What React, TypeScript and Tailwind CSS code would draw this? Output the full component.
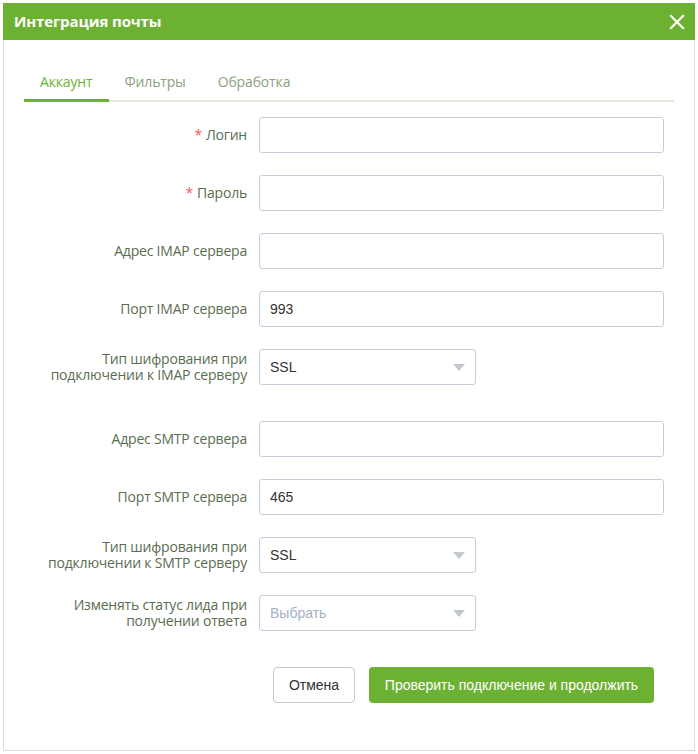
import React from "react";

const LABEL_FONT = "font-['Open_Sans',sans-serif]";

function Label({ children, required }: { children: React.ReactNode; required?: boolean }) {
  return (
    <div
      className={`w-[223px] shrink-0 text-right text-[14px] leading-[16px] tracking-[-0.2px] text-[#5a6d50] ${LABEL_FONT}`}
    >
      {required && <span className="mr-1 text-[#ee5a5a]">*</span>}
      {children}
    </div>
  );
}

function TextInput({ value }: { value?: string }) {
  return (
    <div className="flex h-[36px] w-[405px] items-center rounded-[3px] border border-[#c4cedb] bg-white px-[10px] font-['Liberation_Sans',Arial,sans-serif] text-[14px] text-[#333]">
      {value}
    </div>
  );
}

function SelectInput({ value, placeholder }: { value?: string; placeholder?: string }) {
  return (
    <div className="flex h-[36px] w-[217px] items-center justify-between rounded-[3px] border border-[#c4cedb] bg-white pl-[10px] pr-[10px] font-['Liberation_Sans',Arial,sans-serif] text-[14px]">
      <span className={value ? "text-[#333]" : "text-[#a3b0c2]"}>{value ?? placeholder}</span>
      <svg width="12" height="7" viewBox="0 0 12 7">
        <path d="M0 0 L12 0 L6 7 Z" fill="#c2c8cf" />
      </svg>
    </div>
  );
}

function Row({
  label,
  required,
  children,
  className = "",
}: {
  label: React.ReactNode;
  required?: boolean;
  children: React.ReactNode;
  className?: string;
}) {
  return (
    <div className={`flex items-center gap-[12px] ${className}`}>
      <Label required={required}>{label}</Label>
      {children}
    </div>
  );
}

export default function App() {
  return (
    <div className="h-[754px] w-[698px] bg-white p-[3px]">
      <div className="flex h-[748px] w-[692px] flex-col border-x border-b border-[#dcdcdc]">
        <div className="-mx-px flex h-[37px] items-center justify-between bg-[#6db133] pl-[11px] pr-[10px]">
          <span className="font-['Open_Sans',sans-serif] text-[15px] font-bold tracking-[-0.1px] text-white">
            Интеграция почты
          </span>
          <svg width="16" height="16" viewBox="0 0 16 16">
            <path d="M2 2 L14 14 M14 2 L2 14" stroke="white" strokeWidth="2.2" strokeLinecap="square" />
          </svg>
        </div>

        <div className="px-[20px] pt-[21px]">
          <div className="flex h-[41px] border-b-2 border-[#dfe8da] font-['Open_Sans',sans-serif] text-[14px] tracking-[-0.15px]">
            <div className="-mb-[2px] flex items-center border-b-[3px] border-[#6db133] px-[16px] pt-[3px] text-[#6db133]">
              Аккаунт
            </div>
            <div className="flex items-center px-[16px] pt-[2px] text-[#8aa27d]">Фильтры</div>
            <div className="flex items-center px-[16px] pt-[2px] text-[#8aa27d]">Обработка</div>
          </div>

          <div className="mt-[15px] flex flex-col gap-[22px]">
            <Row label="Логин" required>
              <TextInput />
            </Row>
            <Row label="Пароль" required>
              <TextInput />
            </Row>
            <Row label="Адрес IMAP сервера">
              <TextInput />
            </Row>
            <Row label="Порт IMAP сервера">
              <TextInput value="993" />
            </Row>
            <Row
              label={
                <>
                  Тип шифрования при
                  <br />
                  подключении к IMAP серверу
                </>
              }
              className="mb-[14px]"
            >
              <SelectInput value="SSL" />
            </Row>
            <Row label="Адрес SMTP сервера">
              <TextInput />
            </Row>
            <Row label="Порт SMTP сервера">
              <TextInput value="465" />
            </Row>
            <Row
              label={
                <>
                  Тип шифрования при
                  <br />
                  подключении к SMTP серверу
                </>
              }
            >
              <SelectInput value="SSL" />
            </Row>
            <Row
              label={
                <>
                  Изменять статус лида при
                  <br />
                  получении ответа
                </>
              }
            >
              <SelectInput placeholder="Выбрать" />
            </Row>
          </div>

          <div className="mt-[36px] flex gap-[14px] pl-[249px] font-['Liberation_Sans',Arial,sans-serif] text-[14px]">
            <button className="h-[36px] w-[82px] rounded-[4px] border border-[#c8c8c8] bg-white text-[#333]">
              Отмена
            </button>
            <button className="h-[36px] w-[285px] rounded-[4px] bg-[#6db133] text-white">
              Проверить подключение и продолжить
            </button>
          </div>
        </div>
      </div>
    </div>
  );
}
